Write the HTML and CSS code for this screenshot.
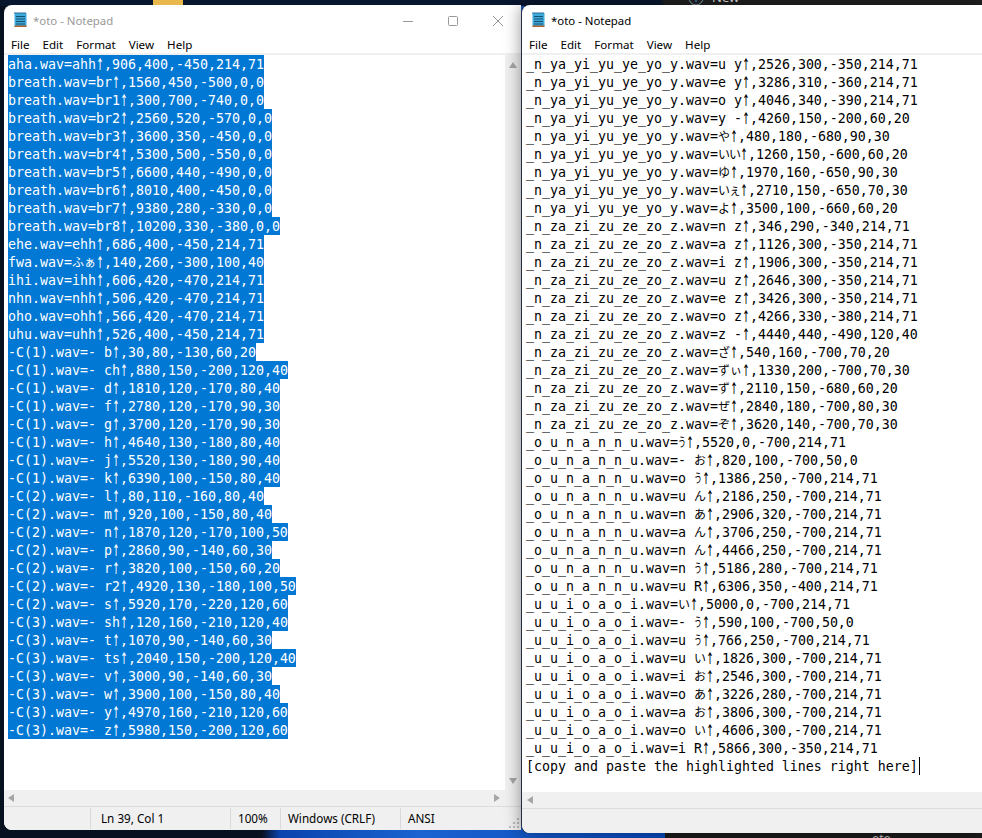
FILE: index.html
```html
<!DOCTYPE html>
<html lang="en">
<head>
<meta charset="utf-8">
<title>oto - Notepad</title>
<link rel="stylesheet" href="styles.css">
</head>
<body>
<div class="desktop">
  <div class="behind-folder"></div>
  <div class="behind-top">
    <svg class="behind-plus" width="16" height="16" viewBox="0 0 16 16"><circle cx="8" cy="8" r="7" fill="none" stroke="#8ab"/><path d="M8 4v8M4 8h8" stroke="#4af"/></svg>
    <span class="behind-new">New</span>
  </div>
  <div class="behind-bottom"><span class="behind-name">oto</span></div>

  <section class="window win-left inactive">
    <header class="titlebar">
      <svg class="app-icon" width="14" height="16" viewBox="0 0 14 16"><rect x="0.5" y="2" width="12" height="13" fill="#3fa9dc"/><rect x="0.5" y="14.5" width="12" height="1.5" fill="#a8622c"/><path d="M1 1v2M3 1v2M5 1v2M7 1v2M9 1v2M11 1v2" stroke="#2a6f9c"/><path d="M2 5.5h9M2 8h9M2 10.500h9M2 13h9" stroke="#17506f"/></svg>
      <span class="title-text">*oto - Notepad</span>
      <div class="controls">
        <svg width="10" height="10" viewBox="0 0 10 10"><path d="M0 5.500h10" stroke="#999"/></svg>
        <svg width="10" height="10" viewBox="0 0 10 10"><rect x="0.500" y="0.500" width="9" height="9" rx="1" fill="none" stroke="#999"/></svg>
        <svg width="10" height="10" viewBox="0 0 10 10"><path d="M0 0l10 10M10 0L0 10" stroke="#999"/></svg>
      </div>
    </header>
    <nav class="menu"><span>File</span><span>Edit</span><span>Format</span><span>View</span><span>Help</span></nav>
    <div class="client">
      <div class="text selected">
        <div class="ln">aha.wav=ahh<b>↑</b>,906,400,-450,214,71</div>
        <div class="ln">breath.wav=br<b>↑</b>,1560,450,-500,0,0</div>
        <div class="ln">breath.wav=br1<b>↑</b>,300,700,-740,0,0</div>
        <div class="ln">breath.wav=br2<b>↑</b>,2560,520,-570,0,0</div>
        <div class="ln">breath.wav=br3<b>↑</b>,3600,350,-450,0,0</div>
        <div class="ln">breath.wav=br4<b>↑</b>,5300,500,-550,0,0</div>
        <div class="ln">breath.wav=br5<b>↑</b>,6600,440,-490,0,0</div>
        <div class="ln">breath.wav=br6<b>↑</b>,8010,400,-450,0,0</div>
        <div class="ln">breath.wav=br7<b>↑</b>,9380,280,-330,0,0</div>
        <div class="ln">breath.wav=br8<b>↑</b>,10200,330,-380,0,0</div>
        <div class="ln">ehe.wav=ehh<b>↑</b>,686,400,-450,214,71</div>
        <div class="ln">fwa.wav=<span class="k">ふぁ</span><b>↑</b>,140,260,-300,100,40</div>
        <div class="ln">ihi.wav=ihh<b>↑</b>,606,420,-470,214,71</div>
        <div class="ln">nhn.wav=nhh<b>↑</b>,506,420,-470,214,71</div>
        <div class="ln">oho.wav=ohh<b>↑</b>,566,420,-470,214,71</div>
        <div class="ln">uhu.wav=uhh<b>↑</b>,526,400,-450,214,71</div>
        <div class="ln">-C(1).wav=- b<b>↑</b>,30,80,-130,60,20</div>
        <div class="ln">-C(1).wav=- ch<b>↑</b>,880,150,-200,120,40</div>
        <div class="ln">-C(1).wav=- d<b>↑</b>,1810,120,-170,80,40</div>
        <div class="ln">-C(1).wav=- f<b>↑</b>,2780,120,-170,90,30</div>
        <div class="ln">-C(1).wav=- g<b>↑</b>,3700,120,-170,90,30</div>
        <div class="ln">-C(1).wav=- h<b>↑</b>,4640,130,-180,80,40</div>
        <div class="ln">-C(1).wav=- j<b>↑</b>,5520,130,-180,90,40</div>
        <div class="ln">-C(1).wav=- k<b>↑</b>,6390,100,-150,80,40</div>
        <div class="ln">-C(2).wav=- l<b>↑</b>,80,110,-160,80,40</div>
        <div class="ln">-C(2).wav=- m<b>↑</b>,920,100,-150,80,40</div>
        <div class="ln">-C(2).wav=- n<b>↑</b>,1870,120,-170,100,50</div>
        <div class="ln">-C(2).wav=- p<b>↑</b>,2860,90,-140,60,30</div>
        <div class="ln">-C(2).wav=- r<b>↑</b>,3820,100,-150,60,20</div>
        <div class="ln">-C(2).wav=- r2<b>↑</b>,4920,130,-180,100,50</div>
        <div class="ln">-C(2).wav=- s<b>↑</b>,5920,170,-220,120,60</div>
        <div class="ln">-C(3).wav=- sh<b>↑</b>,120,160,-210,120,40</div>
        <div class="ln">-C(3).wav=- t<b>↑</b>,1070,90,-140,60,30</div>
        <div class="ln">-C(3).wav=- ts<b>↑</b>,2040,150,-200,120,40</div>
        <div class="ln">-C(3).wav=- v<b>↑</b>,3000,90,-140,60,30</div>
        <div class="ln">-C(3).wav=- w<b>↑</b>,3900,100,-150,80,40</div>
        <div class="ln">-C(3).wav=- y<b>↑</b>,4970,160,-210,120,60</div>
        <div class="ln">-C(3).wav=- z<b>↑</b>,5980,150,-200,120,60</div>
      </div>
      <div class="vscroll"><i class="arrow up"></i><i class="arrow down"></i></div>
    </div>
    <div class="hscroll"><i class="arrow left"></i><i class="arrow right"></i></div>
    <footer class="status">
      <span class="cell c1"></span>
      <span class="cell c2">Ln 39, Col 1</span>
      <span class="cell c3">100%</span>
      <span class="cell c4">Windows (CRLF)</span>
      <span class="cell c5">ANSI</span>
      <svg class="grip" width="12" height="12" viewBox="0 0 12 12" fill="#bbb"><rect x="8" y="0" width="2" height="2"/><rect x="4" y="4" width="2" height="2"/><rect x="8" y="4" width="2" height="2"/><rect x="0" y="8" width="2" height="2"/><rect x="4" y="8" width="2" height="2"/><rect x="8" y="8" width="2" height="2"/></svg>
    </footer>
  </section>

  <section class="window win-right">
    <header class="titlebar">
      <svg class="app-icon" width="14" height="16" viewBox="0 0 14 16"><rect x="0.5" y="2" width="12" height="13" fill="#3fa9dc"/><rect x="0.5" y="14.5" width="12" height="1.5" fill="#a8622c"/><path d="M1 1v2M3 1v2M5 1v2M7 1v2M9 1v2M11 1v2" stroke="#2a6f9c"/><path d="M2 5.5h9M2 8h9M2 10.500h9M2 13h9" stroke="#17506f"/></svg>
      <span class="title-text">*oto - Notepad</span>
    </header>
    <nav class="menu"><span>File</span><span>Edit</span><span>Format</span><span>View</span><span>Help</span></nav>
    <div class="client">
      <div class="text">
        <div class="ln">_n_ya_yi_yu_ye_yo_y.wav=u y<b>↑</b>,2526,300,-350,214,71</div>
        <div class="ln">_n_ya_yi_yu_ye_yo_y.wav=e y<b>↑</b>,3286,310,-360,214,71</div>
        <div class="ln">_n_ya_yi_yu_ye_yo_y.wav=o y<b>↑</b>,4046,340,-390,214,71</div>
        <div class="ln">_n_ya_yi_yu_ye_yo_y.wav=y -<b>↑</b>,4260,150,-200,60,20</div>
        <div class="ln">_n_ya_yi_yu_ye_yo_y.wav=<span class="k">や</span><b>↑</b>,480,180,-680,90,30</div>
        <div class="ln">_n_ya_yi_yu_ye_yo_y.wav=<span class="k tight">いい</span><b>↑</b>,1260,150,-600,60,20</div>
        <div class="ln">_n_ya_yi_yu_ye_yo_y.wav=<span class="k">ゆ</span><b>↑</b>,1970,160,-650,90,30</div>
        <div class="ln">_n_ya_yi_yu_ye_yo_y.wav=<span class="k tight">いぇ</span><b>↑</b>,2710,150,-650,70,30</div>
        <div class="ln">_n_ya_yi_yu_ye_yo_y.wav=<span class="k">よ</span><b>↑</b>,3500,100,-660,60,20</div>
        <div class="ln">_n_za_zi_zu_ze_zo_z.wav=n z<b>↑</b>,346,290,-340,214,71</div>
        <div class="ln">_n_za_zi_zu_ze_zo_z.wav=a z<b>↑</b>,1126,300,-350,214,71</div>
        <div class="ln">_n_za_zi_zu_ze_zo_z.wav=i z<b>↑</b>,1906,300,-350,214,71</div>
        <div class="ln">_n_za_zi_zu_ze_zo_z.wav=u z<b>↑</b>,2646,300,-350,214,71</div>
        <div class="ln">_n_za_zi_zu_ze_zo_z.wav=e z<b>↑</b>,3426,300,-350,214,71</div>
        <div class="ln">_n_za_zi_zu_ze_zo_z.wav=o z<b>↑</b>,4266,330,-380,214,71</div>
        <div class="ln">_n_za_zi_zu_ze_zo_z.wav=z -<b>↑</b>,4440,440,-490,120,40</div>
        <div class="ln">_n_za_zi_zu_ze_zo_z.wav=<span class="k">ざ</span><b>↑</b>,540,160,-700,70,20</div>
        <div class="ln">_n_za_zi_zu_ze_zo_z.wav=<span class="k">ずぃ</span><b>↑</b>,1330,200,-700,70,30</div>
        <div class="ln">_n_za_zi_zu_ze_zo_z.wav=<span class="k">ず</span><b>↑</b>,2110,150,-680,60,20</div>
        <div class="ln">_n_za_zi_zu_ze_zo_z.wav=<span class="k">ぜ</span><b>↑</b>,2840,180,-700,80,30</div>
        <div class="ln">_n_za_zi_zu_ze_zo_z.wav=<span class="k">ぞ</span><b>↑</b>,3620,140,-700,70,30</div>
        <div class="ln">_o_u_n_a_n_n_u.wav=<span class="k narrow">う</span><b>↑</b>,5520,0,-700,214,71</div>
        <div class="ln">_o_u_n_a_n_n_u.wav=- <span class="k">お</span><b>↑</b>,820,100,-700,50,0</div>
        <div class="ln">_o_u_n_a_n_n_u.wav=o <span class="k narrow">う</span><b>↑</b>,1386,250,-700,214,71</div>
        <div class="ln">_o_u_n_a_n_n_u.wav=u <span class="k">ん</span><b>↑</b>,2186,250,-700,214,71</div>
        <div class="ln">_o_u_n_a_n_n_u.wav=n <span class="k">あ</span><b>↑</b>,2906,320,-700,214,71</div>
        <div class="ln">_o_u_n_a_n_n_u.wav=a <span class="k">ん</span><b>↑</b>,3706,250,-700,214,71</div>
        <div class="ln">_o_u_n_a_n_n_u.wav=n <span class="k">ん</span><b>↑</b>,4466,250,-700,214,71</div>
        <div class="ln">_o_u_n_a_n_n_u.wav=n <span class="k narrow">う</span><b>↑</b>,5186,280,-700,214,71</div>
        <div class="ln">_o_u_n_a_n_n_u.wav=u R<b>↑</b>,6306,350,-400,214,71</div>
        <div class="ln">_u_u_i_o_a_o_i.wav=<span class="k">い</span><b>↑</b>,5000,0,-700,214,71</div>
        <div class="ln">_u_u_i_o_a_o_i.wav=- <span class="k narrow">う</span><b>↑</b>,590,100,-700,50,0</div>
        <div class="ln">_u_u_i_o_a_o_i.wav=u <span class="k narrow">う</span><b>↑</b>,766,250,-700,214,71</div>
        <div class="ln">_u_u_i_o_a_o_i.wav=u <span class="k">い</span><b>↑</b>,1826,300,-700,214,71</div>
        <div class="ln">_u_u_i_o_a_o_i.wav=i <span class="k">お</span><b>↑</b>,2546,300,-700,214,71</div>
        <div class="ln">_u_u_i_o_a_o_i.wav=o <span class="k">あ</span><b>↑</b>,3226,280,-700,214,71</div>
        <div class="ln">_u_u_i_o_a_o_i.wav=a <span class="k">お</span><b>↑</b>,3806,300,-700,214,71</div>
        <div class="ln">_u_u_i_o_a_o_i.wav=o <span class="k">い</span><b>↑</b>,4606,300,-700,214,71</div>
        <div class="ln">_u_u_i_o_a_o_i.wav=i R<b>↑</b>,5866,300,-350,214,71</div>
        <div class="ln caret">[copy and paste the highlighted lines right here]</div>
      </div>
    </div>
    <div class="hscroll"><i class="arrow left"></i></div>
    <footer class="status"></footer>
  </section>
</div>
</body>
</html>
```
FILE: styles.css
```css
* { box-sizing: border-box; }
html, body { margin: 0; padding: 0; height: 100%; overflow: hidden; }
body { font-family: "Noto Sans", "Open Sans", sans-serif; }

.desktop {
  position: relative;
  width: 982px;
  height: 838px;
  overflow: hidden;
  background: linear-gradient(90deg, #07101f 0, #07101f 262px, #0a43ad 280px, #1a63d0 420px, #0a48b8 660px);
}
.behind-folder { position: absolute; left: 153px; top: 0; width: 30px; height: 5px; background: #e8b94a; z-index: 1; }
.behind-top {
  position: absolute; left: 0; top: 0; width: 982px; height: 6px;
  background: linear-gradient(90deg, #08162e 0, #08162e 660px, #202020 665px);
  overflow: hidden;
}
.behind-plus { position: absolute; left: 688px; top: -10px; }
.behind-new { position: absolute; left: 712px; top: -12px; font-size: 13px; line-height: 18px; color: #ddd; }
.behind-bottom { position: absolute; left: 665px; top: 833px; width: 317px; height: 5px; background: #1b1b1b; overflow: hidden; }
.behind-name { position: absolute; left: 207px; top: -1px; font-size: 12px; line-height: 14px; color: #bbb; }

.window {
  position: absolute;
  display: flex;
  flex-direction: column;
  background: #fff;
  border-radius: 8px 0 0 8px;
  overflow: hidden;
  color: #000;
}
.win-left { left: 4px; top: 5px; width: 517px; height: 825px; }
.win-right { left: 522px; top: 5px; width: 460px; height: 828px; box-shadow: -2px 0 16px rgba(0, 0, 0, .38), -1px 0 0 #2c3a55; }

.titlebar { height: 31px; flex: none; display: flex; align-items: center; padding: 0 0 0 10px; gap: 5px; font-size: 11.4px; }
.inactive .title-text { color: #999; }
.app-icon { flex: none; margin-top: -3px; }
.controls { margin-left: auto; display: flex; gap: 35px; padding-right: 18px; }
.controls svg { display: block; }

.menu { height: 17px; flex: none; display: flex; gap: 13px; padding-left: 7px; font-size: 11.6px; line-height: 18px; }
.client { flex: 1; min-height: 0; display: flex; border-top: 2px solid #f0f0f0; }

.text {
  flex: 1;
  padding-left: 4px;
  font-family: "DejaVu Sans Mono", "Noto Sans CJK JP", monospace;
  font-size: 13.29px;
  overflow: hidden;
}
.ln { height: 18px; line-height: 20px; width: fit-content; white-space: pre; }
.ln b {
  display: inline-block;
  font-family: "Noto Sans CJK JP", sans-serif;
  font-size: 13.33px;
  font-weight: 700;
  line-height: 0;
  transform: scaleX(.6);
  transform-origin: 0 50%;
  margin-right: -5.33px;
}
.k { font-family: "Noto Sans CJK JP", sans-serif; font-size: 12px; line-height: 0; }
.k.narrow { display: inline-block; transform: scaleX(.67); transform-origin: 0 50%; margin-right: -4px; }
.k.tight { letter-spacing: -1px; }
.selected .ln { background: #0078d4; color: #fff; }
.caret { border-right: 1px solid #000; padding-right: 1px; }

.vscroll { width: 16px; flex: none; background: #f0f0f0; position: relative; }
.hscroll { height: 17px; flex: none; background: #f0f0f0; border-bottom: 1px solid #dcdcdc; position: relative; }
.status { height: 23px; flex: none; background: #f0f0f0; display: flex; font-size: 11.7px; line-height: 22px; position: relative; }
.win-right .status { height: 24px; }
.cell { display: block; border-right: 1px solid #d9d9d9; margin: 1px 0; padding-left: 10px; line-height: 21px; }
.c1 { width: 87px; }
.c2 { width: 140px; }
.c3 { width: 50px; padding-left: 7px; }
.c4 { width: 120px; padding-left: 7px; }
.c5 { border-right: 0; padding-left: 7px; }
.grip { position: absolute; right: 0; bottom: 0; }

.arrow { position: absolute; width: 0; height: 0; border-style: solid; }
.arrow.up { left: 4px; top: 7px; border-width: 0 4px 6px; border-color: transparent transparent #a6a6a6; }
.arrow.down { left: 4px; bottom: 6px; border-width: 6px 4px 0; border-color: #a6a6a6 transparent transparent; }
.arrow.left { left: 4px; top: 4px; border-width: 4px 6px 4px 0; border-color: transparent #a6a6a6 transparent transparent; }
.arrow.right { right: 21px; top: 4px; border-width: 4px 0 4px 6px; border-color: transparent transparent transparent #a6a6a6; }
.win-right .arrow.left { left: 5px; top: 4px; }
```
